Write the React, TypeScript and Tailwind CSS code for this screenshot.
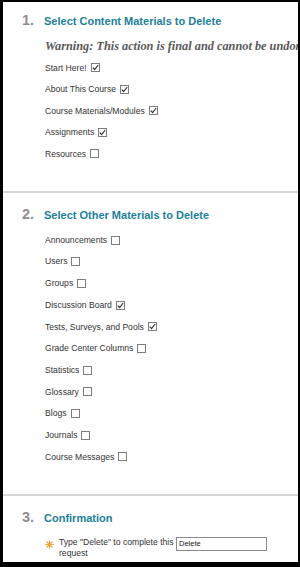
import React from "react";

const Check = ({ checked }: { checked: boolean }) => (
  <span className="ml-[4px] inline-flex h-[9px] w-[9px] shrink-0 items-center justify-center border border-[#7d7d7d] bg-white">
    {checked && (
      <svg width="7" height="7" viewBox="0 0 7 7">
        <path d="M0.8 3.6 L2.6 5.6 L6.2 1.0" fill="none" stroke="#2b2b2b" strokeWidth="1.1" />
      </svg>
    )}
  </span>
);

const Row = ({ label, checked }: { label: string; checked: boolean }) => (
  <div className="flex h-[21.7px] items-center pl-[42px] text-[8.6px] leading-none text-[#333]">
    <span className="whitespace-nowrap">{label}</span>
    <Check checked={checked} />
  </div>
);

const Heading = ({ n, title }: { n: string; title: string }) => (
  <div className="flex h-[16px] items-baseline pl-[19px] leading-[16px]">
    <span className="w-[22px] shrink-0 text-[14.5px] font-bold text-[#8f8f8f]">{n}</span>
    <span className="text-[11px] font-bold text-[#217f9c]">{title}</span>
  </div>
);

const s1: [string, boolean][] = [
  ["Start Here!", true],
  ["About This Course", true],
  ["Course Materials/Modules", true],
  ["Assignments", true],
  ["Resources", false],
];

const s2: [string, boolean][] = [
  ["Announcements", false],
  ["Users", false],
  ["Groups", false],
  ["Discussion Board", true],
  ["Tests, Surveys, and Pools", true],
  ["Grade Center Columns", false],
  ["Statistics", false],
  ["Glossary", false],
  ["Blogs", false],
  ["Journals", false],
  ["Course Messages", false],
];

export default function App() {
  return (
    <div
      className="h-[567px] w-[300px] bg-black pb-[5px] pl-[3px] pr-[2px] pt-[2px]"
      style={{ fontFamily: '"Liberation Sans", Arial, sans-serif' }}
    >
      <div className="flex h-full flex-col overflow-hidden bg-white">
        <div className="pt-[10px]">
          <Heading n="1." title="Select Content Materials to Delete" />
          <div
            className="mt-[10.5px] h-[14px] whitespace-nowrap pl-[42px] text-[12.3px] font-bold italic leading-[14px] text-[#5a5a5a]"
            style={{ fontFamily: '"Liberation Serif", Georgia, serif' }}
          >
            Warning: This action is final and cannot be undone
          </div>
          <div className="mt-[4.5px]">
            {s1.map(([l, c]) => (
              <div key={l} className="h-[21.5px]">
                <Row label={l} checked={c} />
              </div>
            ))}
          </div>
        </div>
        <div className="mt-[26px] h-[2px] shrink-0 bg-[#d6d6d6]" />
        <div className="pt-[13.5px]">
          <Heading n="2." title="Select Other Materials to Delete" />
          <div className="mt-[7.25px]">
            {s2.map(([l, c]) => (
              <Row key={l} label={l} checked={c} />
            ))}
          </div>
        </div>
        <div className="mt-[26.5px] h-[2px] shrink-0 bg-[#d6d6d6]" />
        <div className="pt-[13px]">
          <Heading n="3." title="Confirmation" />
          <div className="mt-[12px] flex items-start pl-[42px]">
            <svg width="9" height="9" viewBox="0 0 9 9" className="mt-[2.5px] shrink-0">
              <g stroke="#f0a035" strokeWidth="1.2" strokeLinecap="round">
                <line x1="0.8" y1="4.5" x2="8.2" y2="4.5" />
                <line x1="4.5" y1="1" x2="4.5" y2="8" />
                <line x1="1.8" y1="1.8" x2="7.2" y2="7.2" />
                <line x1="7.2" y1="1.8" x2="1.8" y2="7.2" />
              </g>
            </svg>
            <div className="ml-[5px] w-[116px] shrink-0 text-[8.6px] leading-[10.5px] text-[#333]">
              Type "Delete" to complete this request
            </div>
            <div className="ml-[1px] flex h-[13.5px] w-[91px] items-center border border-[#8a8a8a] bg-white pl-[2px] text-[7.5px] leading-none text-[#222]">
              Delete
            </div>
          </div>
        </div>
      </div>
    </div>
  );
}
